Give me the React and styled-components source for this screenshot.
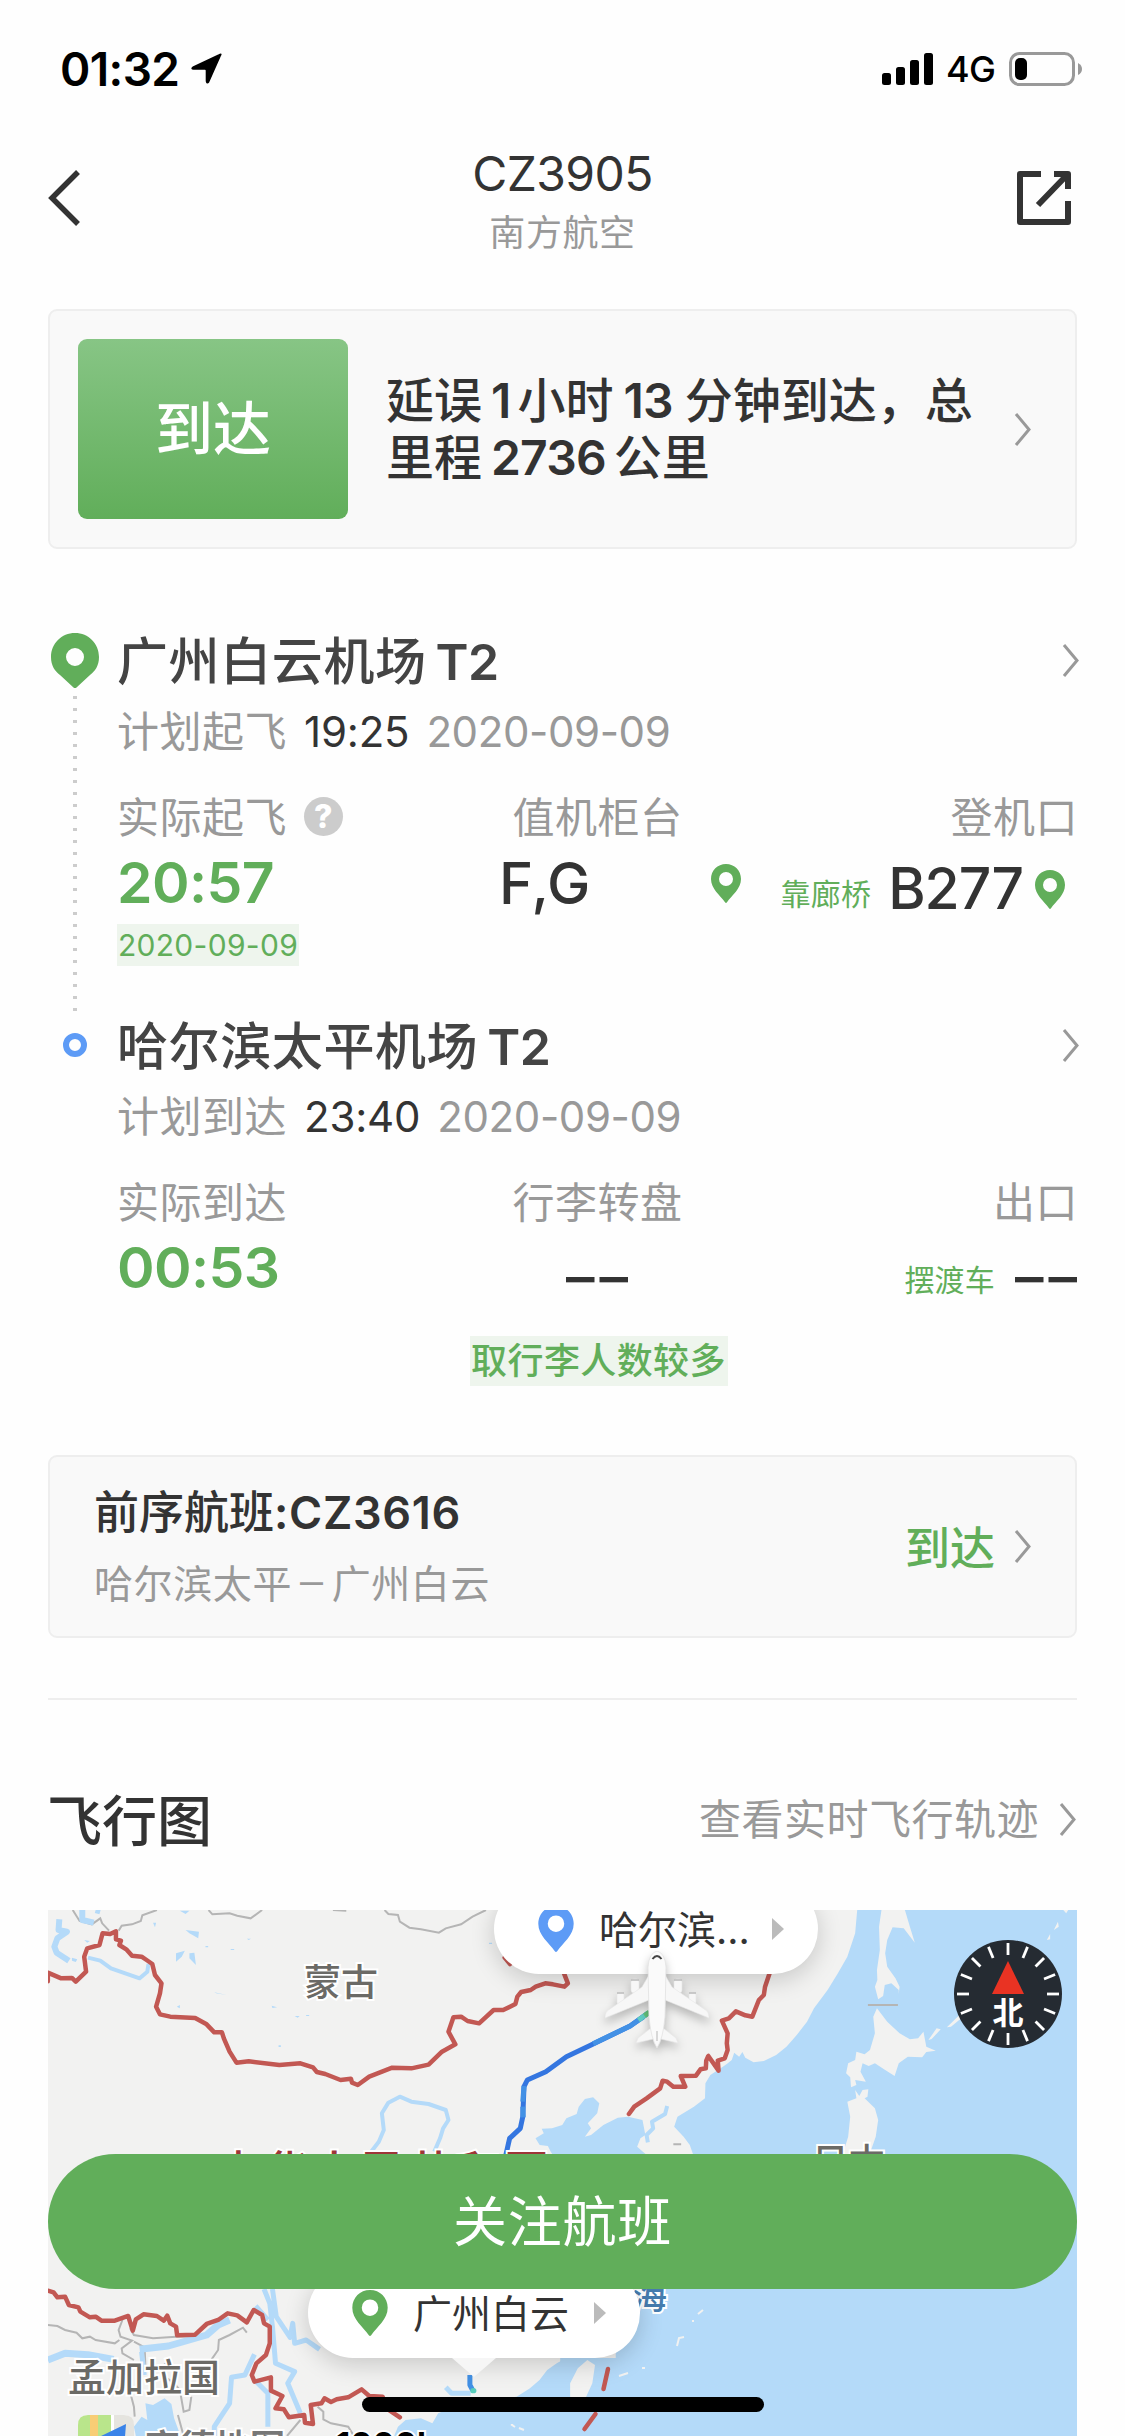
import React from 'react'
import styled, { createGlobalStyle } from 'styled-components';

const GREEN = '#61ae5a';

function Chevron({ left, width = 18, height = 33, color = '#999', stroke = 3 }) {
  const d = left
    ? `M${width - 2} 2 L4 ${height / 2} L${width - 2} ${height - 2}`
    : `M2 1 L${width - 3} ${height / 2} L2 ${height - 1}`;
  return (
    <Icon width={width} height={height} viewBox={`0 0 ${width} ${height}`}>
      <path d={d} fill="none" stroke={color} strokeWidth={stroke} />
    </Icon>
  )
}

function Pin({ width = 30, height = 39, color = GREEN }) {
  return (
    <Icon width={width} height={height} viewBox="0 0 30 39">
      <path
        fill={color}
        fillRule="evenodd"
        d="M15 0C6.500 0 0 6.500 0 15C0 25 9 31 14 38.300Q15 39.500 16 38.300C21 31 30 25 30 15C30 6.500 23.500 0 15 0ZM15 8A7 7 0 1 1 15 22A7 7 0 1 1 15 8Z"
      />
    </Icon>
  )
}

function StatusBar() {
  return (
    <StatusRow>
      <Clock>01:32</Clock>
      <Icon width="33" height="32" viewBox="0 0 33 32">
        <path d="M30.500 2 L18.500 29 Q17 31 16.500 28 V17.500 Q16.500 16 15 16 H3.500 Q1 16 3 14.300 L29 2 Q31.500 .5 30.500 2Z" fill="#000" stroke="#000" strokeWidth="1.6" strokeLinejoin="round" />
      </Icon>
      <StatusRight>
        <Icon width="51" height="32" viewBox="0 0 51 32">
          <rect x="0" y="20" width="9" height="12" rx="2.500" />
          <rect x="14" y="14" width="9" height="18" rx="2.500" />
          <rect x="28" y="7" width="9" height="25" rx="2.500" />
          <rect x="42" y="0" width="9" height="32" rx="2.500" />
        </Icon>
        <Network>4G</Network>
        <Icon width="74" height="34" viewBox="0 0 74 34">
          <rect x="1.500" y="1.500" width="63" height="31" rx="9" fill="none" stroke="#999" strokeWidth="3" />
          <rect x="6" y="6" width="12" height="22" rx="5" />
          <path d="M69 11 Q73 13 73 17 Q73 21 69 23Z" fill="#999" />
        </Icon>
      </StatusRight>
    </StatusRow>
  )
}

function Header() {
  return (
    <HeaderRow>
      <Chevron left width={32} height={56} color="#333" stroke={5.5} />
      <div>
        <FlightNo>CZ3905</FlightNo>
        <Airline>南方航空</Airline>
      </div>
      <Icon width="54" height="54" viewBox="0 0 54 54">
        <path d="M24 3 H3 V51 H51 V30 M37 3 H51 V18 M50 4 L21 34" fill="none" stroke="#333" strokeWidth="6" strokeLinejoin="round" />
      </Icon>
    </HeaderRow>
  )
}

function Stop({ origin, airport, terminal, plan, time, date, children }) {
  return (
    <StopGrid $height={origin ? 385 : 437}>
      <Rail>
        {origin ? (
          <>
            <Icon width="48" height="55" viewBox="0 0 48 55">
              <path
                fill={GREEN}
                fillRule="evenodd"
                d="M24 0C10.500 0 0 10.500 0 24C0 33 4 38 9 42L22.500 54.500Q24 55.500 25.500 54.500L39 42C44 38 48 33 48 24C48 10.500 37.500 0 24 0ZM24 15A9 9 0 1 1 24 33A9 9 0 1 1 24 15Z"
              />
            </Icon>
            <Dots />
          </>
        ) : (
          <Ring />
        )}
      </Rail>
      <div>
        <StopTitle>
          <h3>{airport}<Terminal>{terminal}</Terminal></h3>
          <Chevron />
        </StopTitle>
        <PlanRow>
          {plan}
          <PlanTime>{time}</PlanTime>
          <PlanDate>{date}</PlanDate>
        </PlanRow>
        <Columns>{children}</Columns>
      </div>
    </StopGrid>
  )
}

// 지도의 각 구역은 확대된 좌표계로 그리고 transform 으로 줄인다
function MapDrawing() {
  return (
    <MapSvg viewBox="48 1910 1029 526">
      <rect x="48" y="1910" width="1029" height="526" fill="#f2f2f1" />

      {/* east: sea, coast, islands */}
      <g transform="translate(480 1890) scale(.41135 .33333)">
        <path className="sea" d="M917 60L912 130L893 200L870 250L845 300L812 355L795 395L770 435L745 470L720 495L690 513L665 517L645 503L638 486L630 500L618 488L612 510L600 522L585 535L560 555L548 580L547 625L520 650L500 665L480 680L472 710L495 740L510 765L520 800H330V1404H190L195 1400V1640H1460V60Z" />
        <path className="sea" d="M175 715L150 716L155 730L135 745L145 765L165 768L172 785L180 800H410L382 770L390 745L402 735L395 690L360 680L335 683L300 705L270 735L255 740L270 715L262 700L285 670L290 640L275 622L255 627L240 650L235 672L210 685L200 705Z" />
        <path className="land" d="M976 60L970 110L972 180L965 240L966 270L960 290L968 328L980 318L984 285L1000 280L1018 300L1018 312L1020 290L1010 265L990 230L985 190L990 150L1003 112L1030 115L1057 158L1045 110L1033 60Z" />
        <path className="land" d="M965 355L956 380L960 430L948 480L935 493L915 485L912 510L895 520L890 550L900 562L902 592L915 585L912 570L938 575L925 545L930 520L945 528L960 520L985 540L1008 558L1018 520L1040 500L1075 502L1085 486L1108 482L1085 470L1078 425L1065 445L1045 448L1020 430L990 395Z" />
        <path className="land" d="M912 600L922 618L930 600L944 598L942 620L935 625L960 655L968 690L962 740L945 800H880L895 740L900 680L893 635L915 625Z" />
        <path className="land" d="M1090 450L1110 415L1120 418L1098 447ZM1135 412L1165 376L1170 385L1145 410ZM1395 120L1405 95L1407 110ZM1378 150L1386 132V148ZM1418 60H1430L1425 70Z" />
        <path className="river" strokeWidth="4" d="M455 648L450 672L418 695L421 715L405 735L408 757" />
        <path className="red" d="M704 250L693 290L690 315L678 330L662 380L645 376L622 364L605 385L588 392L602 430L600 460L602 480L595 505L578 512L580 542L555 498L550 512L549 535L536 538L525 557L488 558L499 590L470 590L455 575L444 572L438 595L405 625L375 650L362 672" />
        <path className="red" d="M60 203L73 222" />
        <path d="M943 345H1016M470 763H489" className="grey" />
        <path d="M408 370L365 408L270 465L210 500L160 545L115 570L107 590L104 680L98 715L72 745L62 800" className="route" stroke="#3476e0" />
        <path d="M398 380L365 408L275 461M107 588L104 635M104 650L105 682" className="route" stroke="#4391e5" />
        <path d="M410 368L385 390" className="route" stroke="#62cfc5" />
        <path d="M412 366L400 377" className="route" stroke="#66c57c" />
      </g>

      {/* mongolia */}
      <g transform="translate(0 1890) scale(.38265 .33333)">
        <path className="grey" d="M190 60L208 93L240 103L262 85L267 100L285 122M310 122L318 107L345 103L368 93L372 76L410 60M545 60L555 73L600 70L620 77L655 85L685 60M870 60L905 62M1005 60L1015 72L1040 75L1045 95L1070 113L1100 118L1147 128L1165 115L1205 103L1235 80L1270 60" />
        <path className="river" strokeWidth="6" d="M215 60V90L245 98M155 88L153 120L175 125L150 145L142 170L148 188L180 212M250 60L262 64" />
        <path className="river" strokeWidth="4" d="M230 203L262 212L290 235L365 265L385 245L388 222M970 785L990 755L1003 720L998 670L1015 638L1045 620L1075 635L1120 642L1165 660L1172 690L1158 715L1150 745L1135 785" />
        <path className="sea" d="M470 62H495L485 72ZM485 120L520 125L518 145L495 130ZM460 190L483 182L475 200L460 215ZM495 190L508 188L512 225L495 205ZM400 98H408L405 112ZM560 307L592 315L565 310ZM638 330L655 345ZM710 347L724 352L712 354ZM708 117L719 125ZM770 378H783L778 383ZM875 210L893 250ZM188 203L202 208L198 216L188 212ZM220 150L235 153L228 158ZM645 146H656L650 150ZM728 466H734V471H728ZM800 375H808V378H800ZM462 350L470 345V355ZM1215 343L1223 333ZM1278 158H1286V162H1278ZM537 168H544V172H537ZM603 177H612V180H603Z" />
        <path className="red" d="M125 274V248L160 265L188 264L198 275L225 245L220 200L228 175L260 165L268 130L288 132L303 124L303 148L316 152L312 165L330 178L345 197L370 200L383 210L398 222L405 255L422 280L418 310L408 350L418 373L445 380L510 384L540 403L560 427L580 427L585 445L600 485L618 518L650 514L730 525L785 520L818 532L828 546L850 552L890 570L917 566L920 578L935 585L965 560L1025 533L1075 535L1120 524L1155 485L1190 463L1172 425L1185 382L1205 380L1222 393L1252 400L1290 360L1315 360L1347 342L1352 320L1362 306L1387 300L1400 290L1425 280L1445 283L1475 290L1484 280L1474 250" />
      </g>

      {/* south */}
      <g transform="translate(0 2260) scale(.38265 .33333)">
        <path className="sea" d="M355 528L350 500L370 470L385 480L380 430L400 435L430 415L448 432L455 475L472 528ZM1030 528L1040 500L1060 480L1100 475L1130 490L1145 460L1190 440L1250 425L1350 410L1385 385L1410 360L1430 330L1455 310L1480 294H1700V528Z" />
        <path className="land" d="M1535 300L1555 315L1548 370L1530 415L1515 450L1490 410L1490 370L1510 325ZM1335 492H1341V497H1335Z" />
        <path className="grey" d="M125 195L150 198L170 210L200 218L215 235L235 230L250 240L300 250L312 240M320 180L310 210L315 230L345 242L318 265L320 280L350 300M340 205L350 225L400 235L460 230L510 228M350 245L378 262L380 320M553 298L570 270L572 240L600 225L635 203L645 218M425 345L455 370L470 390L480 455L495 450L500 410M342 405L350 440L352 470M465 465L480 528M830 440L845 455L845 478L865 490L910 500L925 528M750 528L785 480M440 330L430 310" />
        <path className="river" strokeWidth="7" d="M365 268L440 258L540 225L570 195L600 180M125 300L170 280L230 284L297 298" />
        <path className="river" strokeWidth="5" d="M370 275L377 345M690 87L705 130L712 200L720 310L770 335L752 370L785 460M712 87L722 170L758 232L765 190L770 250L800 240L835 268M665 283L640 345L605 352L600 430L560 500V528M670 365L700 400L700 500M668 138L700 180M1165 382L1180 400L1230 400" />
        <path className="red" d="M125 92L140 97L150 112L170 110L180 135L205 142L210 155L235 172L250 170L265 182L300 182L335 168L347 212L355 178L375 163L410 168L428 182L437 167L445 190L460 200L463 226L510 224L540 192L570 180L595 160L620 166L645 187L663 150L685 165L690 190L705 200L705 250L695 285L670 310L658 345L665 365L708 352L708 392L738 408L720 445L742 448L755 472L795 465L797 488L818 492L812 435L840 430L848 415L865 426L880 418L910 412L945 388L965 408L1000 410L1010 445L1045 472" />
        <path d="M1228 345V375L1235 390" className="route" stroke="#4391e5" />
        <circle cx="1237" cy="392" r="8" fill="#58cdbb" />
      </g>
      <path className="red" d="M608 2369L603.500 2389M595.500 2414L584.500 2429" />
      <path d="M698 2314L703 2310M677 2346L679 2338L684 2337M619 2376L628 2373M693 2322V2320M642 2368H645M512 2425L515 2427M519 2428L524 2430" stroke="#f2f2f1" strokeWidth="2" fill="none" />

      <MapText x="304" y="1996" $size={37}>蒙古</MapText>
      <MapText x="68" y="2391" $size={38}>孟加拉国</MapText>
      <MapText x="812" y="2175" $size={36.5}>日本</MapText>
      <MapText x="597" y="2309" $size={35} $color="#467cae">东海</MapText>
      <MapText x="216" y="2189" $size={45} $color="#9e3638" $spacing="3px">中华人民共和国</MapText>

      {/* amap mark */}
      <g>
        <rect x="78" y="2415" width="56" height="56" rx="10" fill="#fff" />
        <path d="M78 2425Q78 2415 88 2415H111V2436H78Z" fill="#b9e58b" />
        <rect x="90" y="2415" width="8" height="21" fill="#f8cd75" />
        <path d="M114 2415H124Q134 2415 134 2425V2436H114Z" fill="#e5e4df" />
        <path d="M126 2424L99 2437H125Z" fill="#3a83e8" />
      </g>
      <MapText x="145" y="2460" $size={35} $color="#777" $weight={700}>高德地图</MapText>
      <MapText x="336" y="2456" $size={33} $color="#000" $weight={700}>1000km</MapText>
    </MapSvg>
  )
}

function Plane() {
  return (
    <PlaneSvg viewBox="0 0 104 100">
      <g fill="#f7f7f7" stroke="#e6e6e6" strokeWidth=".6">
        <rect x="26" y="28" width="8" height="14" rx="3" />
        <rect x="69" y="28" width="8" height="14" rx="3" />
        <rect x="12" y="41" width="7" height="13" rx="3" />
        <rect x="84" y="41" width="7" height="13" rx="3" />
        <path d="M44 24L37 36L2 60Q0 62 0 67L44 49H60L104 67Q104 62 102 60L67 36L60 24Z" />
        <path d="M46 77L33 87L31 92L48 88H56L73 92L71 87L58 77Z" />
      </g>
      <path d="M26 29H34M69 29H77M12 42H19M84 42H91" stroke="#bbb" strokeWidth="1.5" />
      <path d="M52 0Q44 2 43 16L44 66Q46 88 52 97Q58 88 60 66L61 16Q60 2 52 0Z" fill="#fafafa" stroke="#e2e2e2" strokeWidth=".8" />
      <path d="M47.500 8Q52 2 56.500 8" fill="none" stroke="#444" strokeWidth="2" />
      <path d="M52 80V90" stroke="#ccc" strokeWidth="1.500" />
    </PlaneSvg>
  )
}

function Compass() {
  return (
    <CompassSvg viewBox="-54 -54 108 108">
      <circle r="54" fill="#252b32" />
      {Array.from({ length: 16 }, (_, i) => (
        <path key={i} d="M0 -51V-39" stroke="#fff" strokeWidth="2.800" transform={`rotate(${i * 22.5})`} />
      ))}
      <path d="M0 -33L16 0H-16Z" fill="#e93323" />
      <text y="30" textAnchor="middle" fontSize="31" fontWeight="700" fill="#fff">北</text>
    </CompassSvg>
  )
}

function App() {
  return (
    <Page>
      <GlobalStyle />
      <StatusBar />
      <Header />

      <Card $height={240} $pad={28}>
        <Status>到达</Status>
        <Summary>
          延误<Num $l={9} $r={7}>1</Num>小时<Num $l={10} $r={12}>13</Num>分钟到达，总<br />
          里程<Num $l={9} $r={8}>2736</Num>公里
        </Summary>
        <Chevron />
      </Card>

      <Journey>
        <Stop origin airport="广州白云机场" terminal="T2" plan="计划起飞" time="19:25" date="2020-09-09">
          <Cell>
            <Label>实际起飞<Help>?</Help></Label>
            <ActualTime>20:57</ActualTime>
            <DateTag>2020-09-09</DateTag>
          </Cell>
          <Cell $align="center">
            <Label>值机柜台</Label>
            <Counter><Value>F,G</Value><Pin /></Counter>
          </Cell>
          <Cell $align="flex-end">
            <Label>登机口</Label>
            <Gate><Note>靠廊桥</Note><Value>B277</Value><GatePin><Pin /></GatePin></Gate>
          </Cell>
        </Stop>
        <Stop airport="哈尔滨太平机场" terminal="T2" plan="计划到达" time="23:40" date="2020-09-09">
          <Cell>
            <Label>实际到达</Label>
            <ActualTime>00:53</ActualTime>
          </Cell>
          <Cell $align="center">
            <Label>行李转盘</Label>
            <Gate $low><Empty>––</Empty></Gate>
            <BaggageTag>取行李人数较多</BaggageTag>
          </Cell>
          <Cell $align="flex-end">
            <Label>出口</Label>
            <Gate $low><Note $low>摆渡车</Note><Empty>––</Empty></Gate>
          </Cell>
        </Stop>
      </Journey>

      <Card $height={183} $pad={44}>
        <Previous>
          <PreviousTitle>前序航班<span>:CZ3616</span></PreviousTitle>
          <PreviousRoute>哈尔滨太平<i>–</i>广州白云</PreviousRoute>
        </Previous>
        <PreviousState>到达</PreviousState>
        <Chevron />
      </Card>

      <Divider />
      <MapHeading>
        <h2>飞行图</h2>
        <MapLink><span>查看实时飞行轨迹</span><Chevron /></MapLink>
      </MapHeading>

      <FlightMap>
        <MapDrawing />
        <Bubble $x={446} $y={-26} $width={324}>
          <Pin width={38} height={46} color="#5d9bf6" />
          <span>哈尔滨...</span>
          <Play />
        </Bubble>
        <Bubble $x={260} $y={358} $width={332} $tail>
          <Pin width={38} height={46} />
          <span>广州白云</span>
          <Play />
        </Bubble>
        <Plane />
        <Compass />
      </FlightMap>

      <FollowButton>关注航班</FollowButton>
      <HomeBar />
    </Page>
  )
}

// Styled Components
// ====================================================
const GlobalStyle = createGlobalStyle`
  body {
    margin: 0;
    background: #fff;
  }
  * {
    box-sizing: border-box;
  }
`
const Page = styled.div`
  position: relative;
  width: 1125px;
  height: 2436px;
  overflow: hidden;
  background: #fefefe;
  color: #333;
  font-family: Inter, "Noto Sans CJK SC", sans-serif;
  white-space: nowrap;
`
const Icon = styled.svg`
  display: block;
  flex: none;
`
const StatusRow = styled.div`
  display: flex;
  align-items: center;
  height: 138px;
  padding: 0 42px 0 60px;
  color: #000;
`
const Clock = styled.div`
  width: 130px;
  font-size: 46px;
  font-weight: 600;
  letter-spacing: -.6px;
`
const StatusRight = styled.div`
  display: flex;
  align-items: center;
  margin-left: auto;
`
const Network = styled.span`
  width: 63px;
  margin-left: 13px;
  font-size: 36px;
  font-weight: 450;
  letter-spacing: -.7px;
`
const HeaderRow = styled.header`
  display: grid;
  grid-template-columns: 1fr auto 1fr;
  align-items: start;
  height: 171px;
  padding: 6px 54px 0 48px;
  text-align: center;

  > div {
    margin-left: 6px;
  }
  > svg {
    margin-top: 26px;
  }
  > svg:last-child {
    margin-top: 27px;
    justify-self: end;
  }
`
const FlightNo = styled.div`
  font-size: 48px;
  line-height: 60px;
  letter-spacing: -.6px;
`
const Airline = styled.div`
  margin-top: 5px;
  font-size: 36px;
  line-height: 48px;
  letter-spacing: .6px;
  color: #999;
`
const Card = styled.section`
  display: flex;
  align-items: center;
  height: ${(p) => p.$height}px;
  margin: 0 48px;
  padding: 0 43px 0 ${(p) => p.$pad}px;
  border: 2px solid #eee;
  border-radius: 9px;
  background: #f9f9f9;
`
const Status = styled.div`
  width: 270px;
  height: 180px;
  border-radius: 9px;
  background: linear-gradient(#87c585, #61ae5a);
  color: #fff;
  font-size: 58px;
  line-height: 180px;
  font-weight: 500;
  text-align: center;
`
const Summary = styled.div`
  flex: 1;
  margin-left: 38px;
  font-size: 48px;
  line-height: 57px;
  font-weight: 500;
`
const Num = styled.span`
  margin: 0 ${(p) => p.$r}px 0 ${(p) => p.$l}px;
  font-weight: 600;
  letter-spacing: -.8px;
`
const Journey = styled.section`
  padding: 84px 48px 0;
`
const StopGrid = styled.div`
  display: grid;
  grid-template-columns: 54px 960px;
  column-gap: 15px;
  height: ${(p) => p.$height}px;
`
const Rail = styled.div`
  display: flex;
  flex-direction: column;
  align-items: center;
`
const Dots = styled.div`
  flex: 1;
  width: 4px;
  margin: 8px 0 7px;
  background: repeating-linear-gradient(#ccc 0 3px, transparent 3px 12px);
`
const Ring = styled.div`
  width: 24px;
  height: 24px;
  margin-top: 15px;
  border: 6px solid #5d9bf6;
  border-radius: 50%;
`
const StopTitle = styled.div`
  display: flex;
  align-items: center;
  justify-content: space-between;
  height: 54px;
  margin-right: -3px;

  h3 {
    margin: 0;
    padding-bottom: 4px;
    color: #444;
    font-size: 51px;
    font-weight: 500;
    letter-spacing: .6px;
  }
`
const Terminal = styled.span`
  margin-left: 9px;
  font-size: 50px;
  font-weight: 600;
  letter-spacing: -.5px;
`
const PlanRow = styled.div`
  height: 48px;
  margin-top: 21px;
  color: #999;
  font-size: 42px;
  line-height: 48px;
  letter-spacing: .5px;
`
const PlanTime = styled.span`
  margin-left: 17px;
  color: #333;
  letter-spacing: -.2px;
`
const PlanDate = styled.span`
  margin-left: 17px;
  letter-spacing: -.4px;
`
const Columns = styled.div`
  display: grid;
  grid-template-columns: repeat(3, 320px);
  margin-top: 34px;
`
const Cell = styled.div`
  display: flex;
  flex-direction: column;
  align-items: ${(p) => p.$align || 'flex-start'};
`
const Label = styled.div`
  display: flex;
  align-items: center;
  height: 48px;
  margin-right: -1px;
  color: #999;
  font-size: 42px;
  letter-spacing: .5px;
`
const Help = styled.span`
  width: 39px;
  height: 39px;
  margin: 4px 0 0 17px;
  border-radius: 50%;
  background: #ccc;
  color: #fff;
  font-size: 32px;
  line-height: 39px;
  font-weight: 800;
  text-align: center;
`
const ActualTime = styled.div`
  height: 60px;
  margin-top: 15px;
  color: ${GREEN};
  font-size: 57px;
  line-height: 60px;
  font-weight: 600;
  letter-spacing: -.6px;
`
const DateTag = styled.div`
  width: 182px;
  height: 42px;
  margin-top: 11px;
  background: #eef5ed;
  color: ${GREEN};
  font-size: 30px;
  line-height: 42px;
  letter-spacing: .3px;
  text-align: center;
`
const Value = styled.span`
  font-size: 57px;
  line-height: 60px;
  font-weight: 500;
  letter-spacing: -1px;
`
const Counter = styled.div`
  display: flex;
  align-items: center;
  width: 320px;
  height: 60px;
  margin-top: 15px;

  ${Value} {
    width: 216px;
    margin-right: 58px;
    font-size: 58px;
    letter-spacing: .5px;
    text-align: center;
  }
`
const Gate = styled.div`
  display: flex;
  align-items: baseline;
  height: 60px;
  margin-top: ${(p) => (p.$low ? 20 : 21)}px;
`
const GatePin = styled.div`
  margin: 0 12px 0 12px;
`
const Note = styled.span`
  align-self: flex-start;
  margin-right: ${(p) => (p.$low ? 20 : 17)}px;
  color: ${GREEN};
  font-size: 30px;
  line-height: ${(p) => (p.$low ? 74 : 70)}px;
  letter-spacing: .2px;
`
const Empty = styled(Value)`
  margin-right: -5px;
  line-height: 68px;
  letter-spacing: 5px;
`
const BaggageTag = styled.div`
  width: 258px;
  height: 50px;
  margin: 33px -3px 0 0;
  background: #eef5ed;
  color: ${GREEN};
  font-size: 36px;
  line-height: 51px;
  font-weight: 500;
  letter-spacing: .4px;
  text-align: center;
`
const Previous = styled.div`
  flex: 1;
  padding-top: 4px;
`
const PreviousTitle = styled.div`
  font-size: 45px;
  line-height: 60px;
  font-weight: 500;

  span {
    font-weight: 600;
    letter-spacing: .7px;
  }
`
const PreviousRoute = styled.div`
  margin-top: 8px;
  color: #999;
  font-size: 39px;
  line-height: 60px;
  letter-spacing: .6px;

  i {
    margin: 0 8px;
    font-size: 46px;
    font-style: normal;
    font-weight: 300;
  }
`
const PreviousState = styled.div`
  margin: -3px 19px 0 0;
  color: ${GREEN};
  font-size: 45px;
  font-weight: 500;
`
const Divider = styled.div`
  height: 2px;
  margin: 60px 48px 0;
  background: #eee;
`
const MapHeading = styled.div`
  display: flex;
  align-items: center;
  justify-content: space-between;
  height: 210px;
  padding: 28px 48px 0;

  h2 {
    margin: 0 0 5px -1px;
    font-size: 55px;
    font-weight: 500;
  }
`
const MapLink = styled.div`
  display: flex;
  align-items: center;
  gap: 20px;
  color: #999;
  font-size: 42px;
  letter-spacing: .5px;

  span {
    margin-bottom: 5px;
  }
`
const FlightMap = styled.div`
  position: relative;
  height: 526px;
  margin: 0 48px;
  overflow: hidden;
`
const MapSvg = styled.svg`
  display: block;
  width: 1029px;
  height: 526px;

  path {
    vector-effect: non-scaling-stroke;
  }
  .sea {
    fill: #b4daf9;
  }
  .land {
    fill: #f2f2f1;
  }
  .river {
    fill: none;
    stroke: #b4daf9;
    stroke-linejoin: round;
  }
  .grey {
    fill: none;
    stroke: #b5b5b5;
    stroke-width: 2;
  }
  .red {
    fill: none;
    stroke: #c25853;
    stroke-width: 4.5;
    stroke-linejoin: round;
    stroke-linecap: round;
  }
  .route {
    fill: none;
    stroke-width: 5;
    stroke-linejoin: round;
  }
`
const MapText = styled.text`
  fill: ${(p) => p.$color || '#6b6a66'};
  stroke: #fff;
  stroke-width: 4px;
  paint-order: stroke;
  font-size: ${(p) => p.$size}px;
  font-weight: ${(p) => p.$weight || 500};
  letter-spacing: ${(p) => p.$spacing || '0'};
`
const Bubble = styled.div`
  position: absolute;
  left: ${(p) => p.$x}px;
  top: ${(p) => p.$y}px;
  display: flex;
  align-items: center;
  width: ${(p) => p.$width}px;
  height: 90px;
  padding: 0 34px 0 43px;
  border-radius: 45px;
  background: #fff;
  box-shadow: 0 6px 24px rgba(0, 0, 0, .18);
  font-size: 39px;

  span {
    flex: 1;
    margin: -4px 0 0 24px;
  }
  &::after {
    content: "";
    display: ${(p) => (p.$tail ? 'block' : 'none')};
    position: absolute;
    left: 144px;
    top: 90px;
    border: solid transparent;
    border-width: 19px 22px 0;
    border-top-color: #f6f6f6;
  }
`
const Play = styled.div`
  border: solid transparent;
  border-width: 11px 0 11px 12px;
  border-left-color: #bbb;
`
const PlaneSvg = styled.svg`
  position: absolute;
  left: 557px;
  top: 41px;
  width: 104px;
  height: 100px;
  filter: drop-shadow(0 5px 5px rgba(0, 0, 0, .25));
`
const CompassSvg = styled.svg`
  position: absolute;
  left: 906px;
  top: 30px;
  width: 108px;
  height: 108px;
`
const FollowButton = styled.button`
  position: absolute;
  left: 48px;
  bottom: 147px;
  width: 1029px;
  height: 135px;
  padding: 0 0 6px;
  border: 0;
  border-radius: 68px;
  background: ${GREEN};
  color: #fff;
  font-family: inherit;
  font-size: 54px;
  letter-spacing: .7px;
`
const HomeBar = styled.div`
  position: absolute;
  left: 362px;
  bottom: 24px;
  width: 402px;
  height: 15px;
  border-radius: 8px;
  background: #000;
`
// ====================================================

export default App
